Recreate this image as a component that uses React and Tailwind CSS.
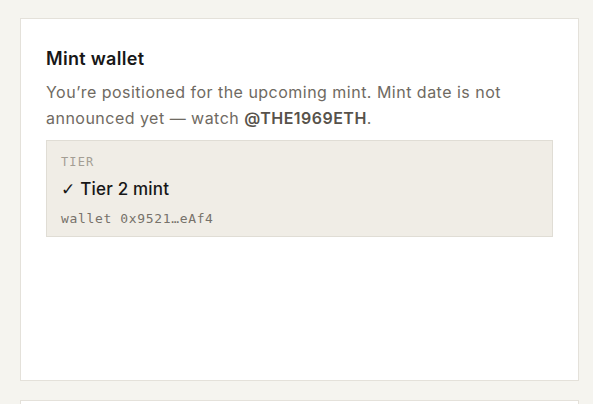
import React from "react";

export default function App() {
  return (
    <div className="h-[404px] w-[593px] bg-[#f5f4ef] overflow-hidden" style={{ fontFamily: "Inter, 'Noto Sans', sans-serif" }}>
      <div className="pl-[20px] pr-[14px] pt-[18px] flex flex-col gap-[19px]">
        <div className="h-[363px] bg-white border border-[#e4e1da] px-[25px] pt-[26px]">
          <h2 className="text-[18px] leading-[28px] font-semibold text-[#171717] tracking-[0.3px]">Mint wallet</h2>
          <p className="mt-[6px] text-[16px] leading-[26px] text-[#6f6a62] tracking-[0.48px]">
            You’re positioned for the upcoming mint. Mint date is not announced yet — watch <span className="font-semibold text-[#57524b]">@THE1969ETH</span>.
          </p>
          <div className="mt-[9px] bg-[#f0ede6] border border-[#e0ddd5] px-[14px] pt-[13px] pb-[7px]">
            <div className="text-[12px] leading-[16px] tracking-[1.1px] text-[#a39e94]" style={{ fontFamily: "'DejaVu Sans Mono', monospace" }}>TIER</div>
            <div className="mt-[7px] text-[17px] leading-[24px] font-medium text-[#171717] tracking-[0.2px]">
              <span style={{ fontFamily: "'DejaVu Sans', sans-serif" }} className="font-normal">✓</span> Tier 2 mint
            </div>
            <div className="mt-[8px] text-[13px] leading-[20px] tracking-[0.65px] text-[#77726a]" style={{ fontFamily: "'DejaVu Sans Mono', monospace" }}>wallet 0x9521…eAf4</div>
          </div>
        </div>
        <div className="h-[40px] bg-white border border-[#e4e1da]"></div>
      </div>
    </div>
  );
}
